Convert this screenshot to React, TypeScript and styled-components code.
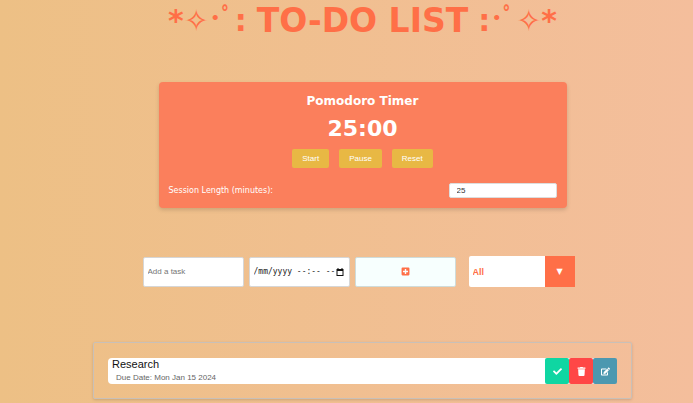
import React, { useState } from "react";
import styled, { createGlobalStyle } from "styled-components";
import { FaCheck, FaEdit, FaPlusSquare, FaTrash } from "react-icons/fa";

const display = `"DejaVu Sans", "Noto Sans CJK JP", sans-serif`;
const body = `"Liberation Sans", Arial, sans-serif`;

const GlobalStyle = createGlobalStyle`
  *, *::before, *::after { box-sizing: border-box; }
  html { min-height: 100%; background: linear-gradient(to right, #edc085, #f4be9c); }
  body { margin: 0; font-family: ${body}; }
  button, input, select { font-family: inherit; margin: 0; }
`;

const Page = styled.div`
  display: flex;
  flex-direction: column;
  align-items: center;
  padding: 0 61px 4px 93px;
`;

const Title = styled.h1`
  display: flex;
  gap: 10px;
  margin: 0;
  height: 40px;
  line-height: 42px;
  color: #ff6f47;
  font-family: ${display};
  font-size: 33px;
  font-weight: 700;
  white-space: nowrap;
`;

const Ornament = styled.span`
  font-size: 30px;
`;

const Marks = styled.span`
  font-size: 26px;
  line-height: 1;
  vertical-align: 4px;
`;

const TimerCard = styled.section`
  display: flex;
  flex-direction: column;
  align-items: center;
  width: 100%;
  max-width: 408px;
  margin-top: 42px;
  padding: 10px;
  border-radius: 4px;
  background: #fb7f5c;
  box-shadow: 0 2px 4px rgba(0, 0, 0, 0.15);
  color: #fff;
  font-family: ${display};
`;

const TimerTitle = styled.h2`
  margin: 0;
  font-size: 12px;
  line-height: 18px;
`;

const Clock = styled.div`
  margin-top: 7px;
  font-size: 22px;
  font-weight: 700;
  line-height: 24px;
`;

const TimerActions = styled.div`
  display: flex;
  gap: 10px;
  margin-top: 8px;
  font-family: ${body};
`;

const TimerButton = styled.button`
  height: 19px;
  padding: 0 10px;
  border: 0;
  border-radius: 2px;
  background: #e8b844;
  color: #fff;
  font-size: 8px;
`;

const SessionRow = styled.div`
  display: flex;
  align-items: center;
  justify-content: space-between;
  width: 100%;
  margin-top: 15px;
`;

const SessionLabel = styled.label`
  font-size: 8px;
`;

const SessionInput = styled.input`
  width: 108px;
  height: 15px;
  padding: 0 7px;
  border: 1px solid #ddd;
  border-radius: 2px;
  background: #fff;
  color: #333;
  font-family: ${body};
  font-size: 8px;
`;

const Controls = styled.div`
  display: flex;
  align-items: center;
  justify-content: center;
  gap: 13px;
  width: 100%;
  margin-top: 48px;
  padding-right: 8px;
`;

const TaskForm = styled.form`
  display: flex;
  gap: 5px;
`;

const Field = styled.div`
  display: flex;
  align-items: center;
  width: 101px;
  height: 30px;
  padding: 0 5px 0 4px;
  border: 1px solid #d6d6d6;
  border-radius: 2px;
  background: #fff;
`;

const FieldInput = styled.input<{ $mono?: boolean }>`
  flex: 1;
  min-width: 0;
  padding: 0;
  border: 0;
  outline: 0;
  background: transparent;
  color: #222;
  font-family: ${(p) => (p.$mono ? `"DejaVu Sans Mono", monospace` : body)};
  font-size: 8px;
  &::placeholder { color: #757575; opacity: 1; }
`;

const PickerButton = styled.button`
  display: flex;
  padding: 0;
  border: 0;
  background: none;
  color: #111;
`;

const AddButton = styled.button`
  display: flex;
  align-items: center;
  justify-content: center;
  width: 101px;
  height: 30px;
  border: 1px solid #cfdcda;
  border-radius: 2px;
  background: #f7fffe;
  color: #ff6f47;
  font-size: 9px;
`;

const Filter = styled.label`
  display: flex;
  height: 31px;
`;

const FilterSelect = styled.select`
  appearance: none;
  width: 76px;
  padding: 0 4px;
  border: 0;
  border-radius: 2px 0 0 2px;
  background: #fff;
  color: #ff6f47;
  font-family: ${body};
  font-size: 9px;
  font-weight: 700;
`;

const FilterArrow = styled.span`
  display: flex;
  align-items: center;
  justify-content: center;
  width: 30px;
  background: #ff6f47;
  color: #fff;
  font-family: ${display};
  font-size: 8px;
`;

const TaskList = styled.ul`
  width: 100%;
  margin: 55px 0 0;
  padding: 15px 14px 14px;
  border: 1px solid #c9c0b8;
  border-radius: 2px;
  box-shadow: 0 1px 3px rgba(0, 0, 0, 0.15);
  list-style: none;
`;

const TaskItem = styled.li`
  display: flex;
  height: 26px;
  border-radius: 4px;
  background: #fff;
`;

const TaskText = styled.div`
  flex: 1;
  padding-left: 4px;
`;

const TaskName = styled.div`
  color: #111;
  font-size: 11px;
  line-height: 13px;
`;

const DueDate = styled.div`
  padding-left: 4px;
  color: #666;
  font-size: 8px;
  line-height: 13px;
`;

const TaskButton = styled.button<{ $color: string }>`
  display: flex;
  align-items: center;
  justify-content: center;
  width: 24px;
  padding: 0;
  border: 0;
  border-radius: 2px;
  background: ${(p) => p.$color};
  color: #fff;
  font-size: 9px;
`;

const CalendarIcon = () => (
  <svg width="8" height="8" viewBox="0 0 16 16" aria-hidden="true">
    <path
      d="M3 0h2v2h6V0h2v2h2v14H1V2h2zM3 6v8h10V6z"
      fill="currentColor"
      fillRule="evenodd"
    />
  </svg>
);

export default function App() {
  const [minutes, setMinutes] = useState("25");
  const [due, setDue] = useState("/mm/yyyy --:-- --");

  return (
    <>
      <GlobalStyle />
      <Page>
        <Title>
          <Ornament>*✧<Marks>･ﾟ</Marks>:</Ornament>
          <span>TO-DO LIST</span>
          <Ornament>:<Marks>･ﾟ</Marks>✧*</Ornament>
        </Title>

        <TimerCard>
          <TimerTitle>Pomodoro Timer</TimerTitle>
          <Clock>25:00</Clock>
          <TimerActions>
            <TimerButton>Start</TimerButton>
            <TimerButton>Pause</TimerButton>
            <TimerButton>Reset</TimerButton>
          </TimerActions>
          <SessionRow>
            <SessionLabel htmlFor="session">Session Length (minutes):</SessionLabel>
            <SessionInput
              id="session"
              inputMode="numeric"
              value={minutes}
              onChange={(e) => setMinutes(e.target.value)}
            />
          </SessionRow>
        </TimerCard>

        <Controls>
          <TaskForm onSubmit={(e) => e.preventDefault()}>
            <Field>
              <FieldInput aria-label="Task" placeholder="Add a task" />
            </Field>
            <Field>
              <FieldInput
                $mono
                aria-label="Due date"
                value={due}
                onChange={(e) => setDue(e.target.value)}
              />
              <PickerButton type="button" aria-label="Open calendar">
                <CalendarIcon />
              </PickerButton>
            </Field>
            <AddButton type="submit" aria-label="Add task">
              <FaPlusSquare />
            </AddButton>
          </TaskForm>
          <Filter>
            <FilterSelect aria-label="Filter tasks" defaultValue="all">
              <option value="all">All</option>
              <option value="completed">Completed</option>
              <option value="uncompleted">Uncompleted</option>
            </FilterSelect>
            <FilterArrow aria-hidden="true">▼</FilterArrow>
          </Filter>
        </Controls>

        <TaskList>
          <TaskItem>
            <TaskText>
              <TaskName>Research</TaskName>
              <DueDate>Due Date: Mon Jan 15 2024</DueDate>
            </TaskText>
            <TaskButton $color="#0fd6a2" aria-label="Complete task">
              <FaCheck />
            </TaskButton>
            <TaskButton $color="#ff4746" aria-label="Delete task">
              <FaTrash />
            </TaskButton>
            <TaskButton $color="#4c98b0" aria-label="Edit task">
              <FaEdit />
            </TaskButton>
          </TaskItem>
        </TaskList>
      </Page>
    </>
  );
}
